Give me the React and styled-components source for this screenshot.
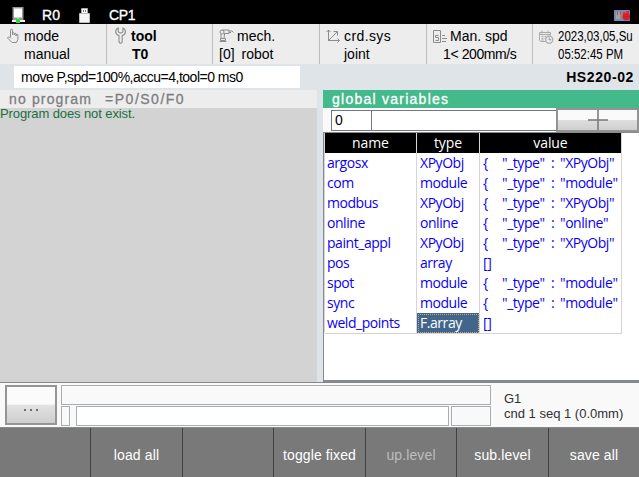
import React from "react";
import styled, { createGlobalStyle } from "styled-components";

const Global = createGlobalStyle`
  * { box-sizing: border-box; }
  body { margin: 0; background: #f9f9f9; }
  svg { display: block; }
`;

const Screen = styled.div`
  width: 639px;
  height: 477px;
  display: flex;
  flex-direction: column;
  overflow: hidden;
  font-family: "Liberation Sans", Arial, sans-serif;
  font-size: 14px;
  color: #000;
  background: #dfe4e8;
  white-space: pre;
`;

const Text = styled.span`
  display: block;
  letter-spacing: ${(p) => p.$ls || 0}px;
  font-weight: ${(p) => (p.$bold ? 700 : 400)};
  font-size: ${(p) => p.$size || 14}px;
  transform: ${(p) => (p.$condensed ? "scaleX(0.82)" : "none")};
  transform-origin: left;
`;

const TopBar = styled.header`
  flex: none;
  height: 24px;
  padding: 7px 9px 0 11px;
  display: flex;
  color: #fff;
  background: #000;
  line-height: 16px;
`;

const TopItem = styled.div`
  display: flex;
  width: ${(p) => p.$w}px;
  gap: ${(p) => p.$gap}px;
  -webkit-text-stroke: 0.35px #fff;
`;

const CardSlot = styled.div`
  margin: 3px 0 0 auto;
`;

const StatusBar = styled.section`
  flex: none;
  height: 40px;
  display: grid;
  grid-template-columns: 107px 106px 107px 107px 106px 106px;
  background: #ededed;
`;

const StatusCell = styled.div`
  display: grid;
  grid-template-columns: ${(p) => p.$icon}px 1fr;
  grid-template-rows: 18px 18px;
  padding: 3px 0 0 ${(p) => p.$pad}px;
  border-right: 1px solid ${(p) => (p.$last ? "#ededed" : "#bdbdbd")};
  line-height: ${(p) => (p.$last ? 18 : 19)}px;
  overflow: hidden;
`;

const StatusIcon = styled.div`
  padding-top: ${(p) => p.$drop}px;
`;

const StatusSecond = styled.div`
  grid-column: 1 / -1;
  display: flex;
  padding-left: ${(p) => p.$in}px;
  gap: 7px;
`;

const MessageBar = styled.section`
  flex: none;
  height: 26px;
  padding: 2px 5px 2px 14px;
  display: flex;
  justify-content: space-between;
  line-height: 23px;
`;

const Message = styled.div`
  width: 286px;
  padding-left: 7px;
  background: #fff;
`;

const Panels = styled.main`
  flex: none;
  height: 293px;
  display: grid;
  grid-template-columns: 317px 316px;
  column-gap: 6px;
  border-bottom: 1px solid #85868a;
`;

const Panel = styled.section`
  display: flex;
  flex-direction: column;
  min-width: 0;
`;

const PanelTitle = styled.div`
  height: 18px;
  display: flex;
  gap: 13px;
  padding-left: 9px;
  line-height: 19px;
  color: ${(p) => (p.$active ? "#fff" : "#7d7d80")};
  background: ${(p) => (p.$active ? "#44b98c" : "#ededed")};
  -webkit-text-stroke: 0.3px currentColor;
`;

const ProgramBody = styled.div`
  flex: 1;
  background: #d3d3d3;
  color: #186f42;
  line-height: 12px;
`;

const FilterRow = styled.div`
  height: 24px;
  display: flex;
  padding-left: 8px;
  background: #fafafa;
`;

const FilterField = styled.div`
  width: ${(p) => p.$w}px;
  height: 21px;
  margin-top: 2px;
  margin-right: -1px;
  padding-left: 3px;
  border: 1px solid #77777b;
  background: #fff;
  line-height: 19px;
`;

const AddButton = styled.button`
  flex: 1;
  height: 24px;
  padding: 0;
  display: flex;
  align-items: center;
  justify-content: center;
  border: 2px solid #939393;
  background: linear-gradient(#fafafa 0 48%, #dedede 50%, #cfcfcf);
`;

const ListBox = styled.div`
  flex: 1;
  border-top: 1px solid #858990;
  border-left: 1px solid #858990;
  border-bottom: 2px solid #858990;
  background: #fff;
`;

const Table = styled.div`
  width: 298px;
  border-left: 1px solid #d5d5d5;
  font-family: "Open Sans", "Noto Sans", sans-serif;
  font-size: 14px;
  letter-spacing: -0.45px;
  color: #0a00f5;
`;

const Row = styled.div`
  display: grid;
  grid-template-columns: 92px 63px 142px;
  height: 20px;
  line-height: 20px;
`;

const HeadCell = styled.div`
  color: #fff;
  background: #000;
  text-align: center;
  border-right: 1px solid #d5d5d5;
  border-bottom: 1px solid #d5d5d5;
  line-height: 20px;
  letter-spacing: -0.1px;
`;

const Cell = styled.div`
  display: flex;
  padding-left: ${(p) => p.$pad}px;
  border-right: 1px solid #d5d5d5;
  border-bottom: 1px solid #d5d5d5;
  color: ${(p) => (p.$selected ? "#fff" : "inherit")};
  background: ${(p) => (p.$selected ? "#42658b" : "#fff")};
  outline: ${(p) => (p.$selected ? "1px dotted #d0a47a" : "none")};
  outline-offset: -2px;
`;

const Token = styled.span`
  width: ${(p) => p.$w}px;
`;

const CommandBar = styled.section`
  flex: none;
  height: 44px;
  padding: 2px 0 0 5px;
  display: flex;
  background: #f9f9f9;
`;

const MoreButton = styled.button`
  width: 52px;
  height: 40px;
  padding: 10px 0 0;
  display: flex;
  align-items: center;
  justify-content: center;
  gap: 4px;
  border: 2px solid #959595;
  background: linear-gradient(#fbfbfb 0 48%, #e2e2e2 50%, #cecece);
`;

const Dot = styled.i`
  width: 2px;
  height: 2px;
  background: #6c6c6c;
`;

const Fields = styled.div`
  width: 430px;
  margin-left: 4px;
  display: grid;
  grid-template-columns: 15px 375px 40px;
  grid-template-rows: 20px 20px;
  row-gap: 1px;
`;

const Field = styled.div`
  border: 1px solid #a8aeb2;
  background: ${(p) => (p.$input ? "#fff" : "#f9f9f9")};
  grid-column: ${(p) => (p.$wide ? "1 / -1" : "auto")};
  margin-right: ${(p) => p.$after || 0}px;
`;

const Condition = styled.div`
  margin-left: 13px;
  padding-top: 6px;
  line-height: 15px;
  color: #303030;
`;

const SoftKeys = styled.nav`
  flex: 1;
  display: grid;
  grid-template-columns: 91px 92px 91px 92px 91px 92px 90px;
  border-top: 1px solid #858b89;
  background: #797979;
`;

const SoftKey = styled.button`
  padding: 4px 0 0;
  border: 0;
  border-right: ${(p) => (p.$last ? 0 : 1)}px solid #414141;
  background: transparent;
  font: 14px "Liberation Sans", Arial, sans-serif;
  letter-spacing: 0.12px;
  color: ${(p) => (p.disabled ? "#bdbdbd" : "#fff")};
`;

const LinkIcon = () => (
  <svg width="15" height="16" viewBox="0 0 15 16">
    <path d="M1.5 0h11v13h-11z" fill="#999" />
    <path d="M3 1.5h8v9H3z" fill="#fff" />
    <path d="M6 11h2v2H6z" fill="#ccc" />
    <path d="M1 13h13v2H1z" fill="#eee" />
    <path d="M5 12h4v4H5z" fill="#1ee52b" />
  </svg>
);

const UsbIcon = () => (
  <svg width="11" height="16" viewBox="0 0 11 16">
    <path d="M2.5 1.5h6v5h-6z" fill="#fff" stroke="#a6a6a6" />
    <path d="M4 3h1v2H4zM6 3h1v2H6z" fill="#777" />
    <path d="M.5 6.5h10v9H.5z" fill="#f5f5f5" stroke="#bcbcbc" />
  </svg>
);

const CardIcon = () => (
  <svg width="16" height="11" viewBox="0 0 16 11">
    <path d="M.5 .5h15v10H.5z" fill="#858990" stroke="#668be5" />
    <path d="M2 2h4v7H2z" fill="#a3a3a0" />
    <path d="M3 2h1v3H3zM6 2h1v2H6z" fill="#d43b41" />
    <circle cx="12.3" cy="6.5" r="3.8" fill="#e91822" />
    <path d="M9 2h2v2H9zM12 1h3v3h-3z" fill="#ef2430" />
    <path d="M10.5 6h4v1h-4z" fill="#7b384d" />
  </svg>
);

const HandIcon = () => (
  <svg width="13" height="16" viewBox="0 0 13 16" fill="none" stroke="#8c8c8c">
    <path d="M3.5 9V2.2q0-1 1-1t1 1V7V5.5q0-.8.9-.8t.9.8V7v-.8q0-.8.9-.8t.9.8V8V7q0-.8.9-.8t.9.8v4.5l-1.5 3H5L.9 10.4q-.5-.9.4-1.4t1.3.1L4 10.5" />
  </svg>
);

const WrenchIcon = () => (
  <svg width="12" height="17" viewBox="0 0 12 17" fill="none" stroke="#8c8c8c" strokeWidth="1.1">
    <path d="M3.3 1 Q.7 2 .7 4.7 Q.7 7.4 4 8.6V14.5q0 1.7 1.6 1.7t1.6-1.7V8.6q3.2-1.2 3.2-3.9Q10.4 2 7.9 1V4.8q-2.3 2.2-4.6 0z" />
  </svg>
);

const RobotIcon = () => (
  <svg width="16" height="14" viewBox="0 0 16 14" fill="none" stroke="#8c8c8c">
    <path d="M3.5 1h6.5v3.5H5M2 5v4.5M5.5 5L5 9.5M10 2h3l1.5 1.5M10 3.5h2M1.5 9.5h5v2h-5zM.5 12.5h7" />
    <circle cx="3" cy="3" r="2" />
  </svg>
);

const AxesIcon = () => (
  <svg width="15" height="14" viewBox="0 0 15 14" fill="none" stroke="#8c8c8c">
    <path d="M2.5 12V1M.5 3l2-2 2 2M2.5 11.5h11M11.5 9.5l2 2-2 2M3 11l8-8M7.5 2.5h4v4" />
  </svg>
);

const SpeedIcon = () => (
  <svg width="15" height="14" viewBox="0 0 15 14" fill="none" stroke="#8c8c8c">
    <path d="M.5 .5h7v12h-7zM5.5 5.5h-3v2h3v3h-3M9 5.5h3M9 8.5h5M9 11.5h4" />
  </svg>
);

const CalendarIcon = () => (
  <svg width="15" height="14" viewBox="0 0 15 14" fill="none" stroke="#aaa">
    <path d="M7 11.5H1.5L.5 10V2.5h11v3M.5 4.5h11M3 .5v3M9 .5v3M2.5 6.5h2M5.5 6.5h2M2.5 8.5h2M2.5 10h2M5.5 8.5h1" />
    <circle cx="10.2" cy="9.7" r="3.5" fill="#ededed" strokeWidth="1.3" />
    <path d="M10.2 7.5v2.3h2" stroke="#909090" />
  </svg>
);

const PlusIcon = () => (
  <svg width="20" height="20" viewBox="0 0 20 20" fill="none" stroke="#777" strokeWidth="1.5">
    <path d="M10 0v20M0 10h20" />
  </svg>
);

const status = [
  { icon: HandIcon, drop: 1, pad: 7, w: 17, label: "mode", second: ["manual"], inset: 17 },
  { icon: WrenchIcon, drop: 0, pad: 8, w: 16, label: "tool", second: ["T0"], inset: 17, bold: true },
  { icon: RobotIcon, drop: 2, pad: 6, w: 18, label: "mech.", second: ["[0]", "robot"], inset: 0 },
  { icon: AxesIcon, drop: 2, pad: 6, w: 18, label: "crd.sys", ls: 0.4, second: ["joint"], inset: 18 },
  { icon: SpeedIcon, drop: 3, pad: 6, w: 17, label: "Man. spd", second: ["1< 200mm/s"], inset: 10, ls2: -0.4 },
  { icon: CalendarIcon, drop: 3, pad: 6, w: 19, label: "2023,03,05,Su", second: ["05:52:45 PM"], inset: 19, condensed: true },
];

const variables = [
  ["argosx", "XPyObj", "XPyObj"],
  ["com", "module", "module"],
  ["modbus", "XPyObj", "XPyObj"],
  ["online", "online", "online"],
  ["paint_appl", "XPyObj", "XPyObj"],
  ["pos", "array", null],
  ["spot", "module", "module"],
  ["sync", "module", "module"],
  ["weld_points", "F.array", null],
];

const keys = ["", "load all", "", "toggle fixed", "up.level", "sub.level", "save all"];

export default function App() {
  return (
    <>
      <Global />
      <Screen>
        <TopBar>
          <TopItem $w={68} $gap={16}><LinkIcon /><Text $ls={0.2}>R0</Text></TopItem>
          <TopItem $w={60} $gap={19}><UsbIcon /><Text $ls={-0.3}>CP1</Text></TopItem>
          <CardSlot><CardIcon /></CardSlot>
        </TopBar>
        <StatusBar>
          {status.map((s, i) => (
            <StatusCell key={s.label} $pad={s.pad} $icon={s.w} $last={i === 5}>
              <StatusIcon $drop={s.drop}><s.icon /></StatusIcon>
              <Text $ls={s.ls} $bold={s.bold} $condensed={s.condensed}>{s.label}</Text>
              <StatusSecond $in={s.inset}>
                {s.second.map((t) => (
                  <Text key={t} $ls={s.ls2} $bold={s.bold} $condensed={s.condensed}>{t}</Text>
                ))}
              </StatusSecond>
            </StatusCell>
          ))}
        </StatusBar>
        <MessageBar>
          <Message><Text $ls={-0.5}>move P,spd=100%,accu=4,tool=0 ms0</Text></Message>
          <Text $bold $ls={0.6}>HS220-02</Text>
        </MessageBar>
        <Panels>
          <Panel>
            <PanelTitle>
              <Text $ls={1.15}>no program</Text>
              <Text $ls={1.5}>=P0/S0/F0</Text>
            </PanelTitle>
            <ProgramBody><Text $size={13} $ls={-0.1}>Program does not exist.</Text></ProgramBody>
          </Panel>
          <Panel>
            <PanelTitle $active><Text $ls={1.25}>global variables</Text></PanelTitle>
            <FilterRow>
              <FilterField $w={41}>0</FilterField>
              <FilterField $w={186} />
              <AddButton><PlusIcon /></AddButton>
            </FilterRow>
            <ListBox>
              <Table>
                <Row>
                  <HeadCell>name</HeadCell>
                  <HeadCell>type</HeadCell>
                  <HeadCell>value</HeadCell>
                </Row>
                {variables.map(([name, type, value]) => (
                  <Row key={name}>
                    <Cell $pad={2}>{name}</Cell>
                    <Cell $pad={3} $selected={name === "weld_points"}>{type}</Cell>
                    <Cell $pad={3}>
                      {value ? (
                        <>
                          <Token $w={19}>{"{"}</Token>
                          <Token $w={49}>"_type"</Token>
                          <Token $w={9}>:</Token>
                          <span>"{value}"</span>
                        </>
                      ) : "[]"}
                    </Cell>
                  </Row>
                ))}
              </Table>
            </ListBox>
          </Panel>
        </Panels>
        <CommandBar>
          <MoreButton><Dot /><Dot /><Dot /></MoreButton>
          <Fields>
            <Field $wide />
            <Field $after={6} />
            <Field $input $after={2} />
            <Field />
          </Fields>
          <Condition>
            <Text $size={13}>G1</Text>
            <Text $size={13}>cnd 1 seq 1 (0.0mm)</Text>
          </Condition>
        </CommandBar>
        <SoftKeys>
          {keys.map((k, i) => (
            <SoftKey key={i} disabled={k === "up.level"} $last={i === 6}>{k}</SoftKey>
          ))}
        </SoftKeys>
      </Screen>
    </>
  );
}
